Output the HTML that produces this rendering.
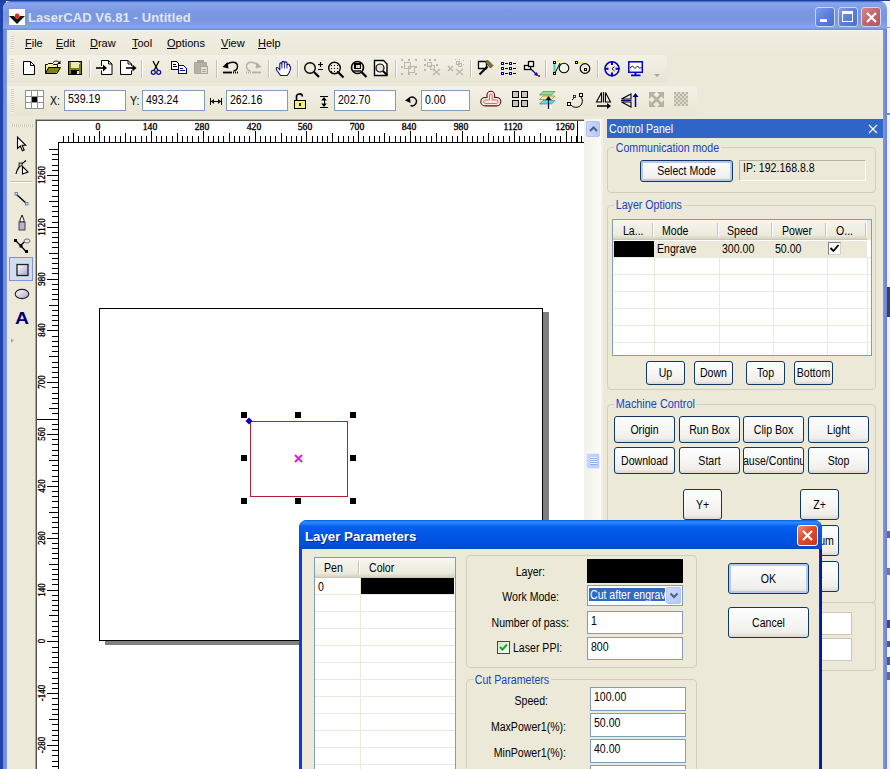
<!DOCTYPE html><html><head><meta charset="utf-8"><title>LaserCAD V6.81 - Untitled</title><style>*{box-sizing:border-box;margin:0;padding:0}
html,body{width:890px;height:769px;overflow:hidden}
body{position:relative;background:#f3f2ec;font-family:"Liberation Sans",sans-serif;font-size:11px;color:#000}
.abs{position:absolute}
.t{position:absolute;white-space:nowrap;line-height:13px}
.win{position:absolute;left:3px;top:1px;width:884px;height:780px;background:#ece9d8;border-radius:8px 8px 0 0;overflow:hidden}
.title{position:absolute;left:0;top:0;width:884px;height:29px;background:linear-gradient(#3a5ac0 0,#6888e0 1px,#8aa8ee 2px,#86a3ea 4px,#7b98e2 10px,#7a96e0 18px,#8099e6 22px,#86a6ea 26px,#7c98e0 28px,#6a84cc 29px)}
.bl{position:absolute;left:0;top:29px;width:4px;height:760px;background:linear-gradient(90deg,#6b86d8,#8099e4)}
.br{position:absolute;left:880px;top:29px;width:4px;height:760px;background:linear-gradient(90deg,#8099e4,#6b7fd0)}
.cap{position:absolute;top:6px;width:20px;height:20px;border:1px solid #c8d6f7;border-radius:3px;background:linear-gradient(135deg,#7f9eec,#5b7fdc 50%,#4c6fd0)}
.menu{position:absolute;top:37px;font-size:11px;line-height:13px}
.menu u{text-decoration:underline}
.sep{position:absolute;width:2px;height:18px;border-left:1px solid #c5c2b2;border-right:1px solid #fff}
.inp{position:absolute;background:#fff;border:1px solid #7f9db9;height:21px;font-size:12px;line-height:15px;padding:1px 0 0 3px;white-space:nowrap;overflow:hidden}
.rl{position:absolute;width:40px;text-align:center;font-family:"Liberation Serif",serif;font-size:10px;line-height:12px;transform:scaleX(.96);-webkit-text-stroke:0.35px #000}
.rv{position:absolute;width:30px;height:12px;text-align:center;font-family:"Liberation Serif",serif;font-size:10px;line-height:12px;transform:rotate(-90deg) scaleX(.89);transform-origin:50% 50%;-webkit-text-stroke:0.35px #000}
.grp{position:absolute;border:1px solid #d0d0bf;border-radius:4px}
.gl{position:absolute;background:#ece9d8;color:#1442c4;font-size:12px;line-height:14px;padding:0 2px;white-space:nowrap}
.btn{position:absolute;border:1px solid #0f3862;border-radius:3px;background:linear-gradient(#fdfeff 0,#f6f6f4 50%,#f0eeea 85%,#dcd6cc 100%);font-size:12px;line-height:14px;text-align:center;white-space:nowrap;overflow:hidden}
.btn span{position:absolute;left:-20px;right:-20px;text-align:center}
.hdr{position:absolute;background:linear-gradient(#f7f6f1 0,#ebeadb 80%,#d6d2c2 100%);border-bottom:1px solid #cbc7b8;font-size:12px;line-height:14px}
.hs{position:absolute;width:2px;border-left:1px solid #c7c5b2;border-right:1px solid #fff}
.gh{position:absolute;height:1px;background:#ece9d8}
.gv{position:absolute;width:1px;background:#ece9d8}
.hd{position:absolute;width:6px;height:6px;background:#000}

.n{transform:scaleX(.88);transform-origin:0 0}
.nr{transform:scaleX(.88);transform-origin:100% 0}
.ns{display:inline-block;transform:scaleX(.88);transform-origin:0 50%}
.btn span{transform:scaleX(.88)}
.gl{transform:scaleX(.885);transform-origin:0 0}
</style></head><body>
<!-- desktop / other windows behind -->
<div class="abs" style="left:0;top:0;width:6px;height:769px;background:#1f45ad"></div>
<div class="abs" style="left:884px;top:27px;width:6px;height:1px;background:#9a9a9a"></div>
<div class="abs" style="left:884px;top:113px;width:6px;height:2px;background:#8a8a8a"></div>
<div class="abs" style="left:886px;top:287px;width:4px;height:30px;background:#2c4470"></div>
<div class="abs" style="left:886px;top:317px;width:4px;height:460px;background:#eef3fb"></div>

<div class="abs" style="left:887px;top:531px;width:3px;height:7px;background:#5a6a9a"></div>
<div class="abs" style="left:887px;top:568px;width:3px;height:7px;background:#6a78a8"></div>
<div class="abs" style="left:887px;top:620px;width:3px;height:8px;background:#3a4a80"></div>
<div class="abs" style="left:887px;top:641px;width:3px;height:6px;background:#4a5a90"></div>
<div class="abs" style="left:887px;top:657px;width:3px;height:8px;background:#4a5a90"></div>
<div class="abs" style="left:887px;top:672px;width:3px;height:8px;background:#5a6aa0"></div>
<div class="win">
 <div class="title"></div>
 <div class="bl"></div><div class="br"></div>
 <!-- app icon -->
 <svg class="abs" style="left:6px;top:8px" width="16" height="16" viewBox="0 0 16 16"><rect width="16" height="16" fill="#fff"/><path d="M0 7h5l3 3 3-3h5l-8 8z" fill="#10140f"/><rect x="6" y="4.6" width="4.2" height="5.2" rx="1.6" fill="#e42a1c"/></svg>
 <div class="t" style="left:25px;top:9px;font-size:13px;font-weight:bold;color:#dfe6fa;line-height:16px;letter-spacing:0.1px">LaserCAD V6.81 - Untitled</div>
 <!-- caption buttons -->
 <div class="cap" style="left:812px"><div class="abs" style="left:4px;top:11px;width:7px;height:3px;background:#fff"></div></div>
 <div class="cap" style="left:835px"><div class="abs" style="left:3px;top:3px;width:11px;height:11px;border:1px solid #fff;border-top-width:3px"></div></div>
 <div class="cap" style="left:858px;background:linear-gradient(135deg,#d08a90,#c2656b 50%,#b4565c)"><svg class="abs" style="left:0;top:0" width="19" height="19"><path d="M5 5l9 9M14 5l-9 9" stroke="#fff" stroke-width="2.2" fill="none"/></svg></div>

 <!-- menu bar -->
</div>

<div class="abs" style="left:0;top:0;width:890px;height:1px;background:#1d3f9c"></div>
<div class="abs" style="left:7px;top:30px;width:876px;height:1px;background:#f4f4f6"></div>
<div class="abs" style="left:7px;top:31px;width:876px;height:23px;background:linear-gradient(#f0eee2,#ece9da)"></div>
<div class="abs" style="left:7px;top:55px;width:660px;height:28px;background:linear-gradient(#f3f1e7 0,#eeebdd 50%,#e8e5d4 100%);border-radius:0 3px 3px 0"></div>
<div class="abs" style="left:7px;top:86px;width:690px;height:30px;background:linear-gradient(#f3f1e7 0,#eeebdd 50%,#e8e5d4 100%);border-radius:0 3px 3px 0"></div>
<div class="menu" style="left:25px"><u>F</u>ile</div>
<div class="menu" style="left:56px"><u>E</u>dit</div>
<div class="menu" style="left:90px"><u>D</u>raw</div>
<div class="menu" style="left:132px"><u>T</u>ool</div>
<div class="menu" style="left:167px"><u>O</u>ptions</div>
<div class="menu" style="left:221px"><u>V</u>iew</div>
<div class="menu" style="left:258px"><u>H</u>elp</div>
<!-- toolbar grips -->
<div class="abs" style="left:11px;top:36px;width:3px;height:14px;background:repeating-linear-gradient(#d2cfc0 0 1px,#f6f5ee 1px 2px)"></div>
<div class="abs" style="left:11px;top:59px;width:3px;height:20px;background:repeating-linear-gradient(#d2cfc0 0 1px,#f6f5ee 1px 2px)"></div>
<div class="abs" style="left:11px;top:89px;width:3px;height:24px;background:repeating-linear-gradient(#d2cfc0 0 1px,#f6f5ee 1px 2px)"></div>

<!-- TOOLBAR1 -->
<!--TB1-->
<!-- TOOLBAR2 -->
<!--TB2-->

<!-- canvas area -->
<div class="abs" style="left:35px;top:119px;width:549px;height:660px;background:#aca899"></div><div class="abs" style="left:36px;top:120px;width:548px;height:660px;background:#55534a"></div><div class="abs" style="left:37px;top:121px;width:547px;height:660px;background:#fff"></div>
<div class="abs" style="left:58px;top:142px;width:526px;height:1px;background:#000"></div>
<div class="abs" style="left:58px;top:142px;width:1px;height:640px;background:#000"></div>
<div class="abs" style="left:37px;top:419px;width:21px;height:1px;background:#000"></div>
<div class="abs" style="left:577px;top:121px;width:1px;height:21px;background:#000"></div>

<svg class="abs" style="left:0;top:0" width="890" height="769" shape-rendering="crispEdges"><rect x="63" y="136" width="1" height="6" fill="#000"/><rect x="68" y="136" width="1" height="6" fill="#000"/><rect x="73" y="133" width="1" height="9" fill="#000"/><rect x="78" y="136" width="1" height="6" fill="#000"/><rect x="84" y="136" width="1" height="6" fill="#000"/><rect x="89" y="136" width="1" height="6" fill="#000"/><rect x="94" y="136" width="1" height="6" fill="#000"/><rect x="99" y="131" width="1" height="11" fill="#000"/><rect x="104" y="136" width="1" height="6" fill="#000"/><rect x="109" y="136" width="1" height="6" fill="#000"/><rect x="115" y="136" width="1" height="6" fill="#000"/><rect x="120" y="136" width="1" height="6" fill="#000"/><rect x="125" y="133" width="1" height="9" fill="#000"/><rect x="130" y="136" width="1" height="6" fill="#000"/><rect x="135" y="136" width="1" height="6" fill="#000"/><rect x="141" y="136" width="1" height="6" fill="#000"/><rect x="146" y="136" width="1" height="6" fill="#000"/><rect x="151" y="131" width="1" height="11" fill="#000"/><rect x="156" y="136" width="1" height="6" fill="#000"/><rect x="161" y="136" width="1" height="6" fill="#000"/><rect x="166" y="136" width="1" height="6" fill="#000"/><rect x="172" y="136" width="1" height="6" fill="#000"/><rect x="177" y="133" width="1" height="9" fill="#000"/><rect x="182" y="136" width="1" height="6" fill="#000"/><rect x="187" y="136" width="1" height="6" fill="#000"/><rect x="192" y="136" width="1" height="6" fill="#000"/><rect x="198" y="136" width="1" height="6" fill="#000"/><rect x="203" y="131" width="1" height="11" fill="#000"/><rect x="208" y="136" width="1" height="6" fill="#000"/><rect x="213" y="136" width="1" height="6" fill="#000"/><rect x="218" y="136" width="1" height="6" fill="#000"/><rect x="223" y="136" width="1" height="6" fill="#000"/><rect x="229" y="133" width="1" height="9" fill="#000"/><rect x="234" y="136" width="1" height="6" fill="#000"/><rect x="239" y="136" width="1" height="6" fill="#000"/><rect x="244" y="136" width="1" height="6" fill="#000"/><rect x="249" y="136" width="1" height="6" fill="#000"/><rect x="255" y="131" width="1" height="11" fill="#000"/><rect x="260" y="136" width="1" height="6" fill="#000"/><rect x="265" y="136" width="1" height="6" fill="#000"/><rect x="270" y="136" width="1" height="6" fill="#000"/><rect x="275" y="136" width="1" height="6" fill="#000"/><rect x="281" y="133" width="1" height="9" fill="#000"/><rect x="286" y="136" width="1" height="6" fill="#000"/><rect x="291" y="136" width="1" height="6" fill="#000"/><rect x="296" y="136" width="1" height="6" fill="#000"/><rect x="301" y="136" width="1" height="6" fill="#000"/><rect x="306" y="131" width="1" height="11" fill="#000"/><rect x="312" y="136" width="1" height="6" fill="#000"/><rect x="317" y="136" width="1" height="6" fill="#000"/><rect x="322" y="136" width="1" height="6" fill="#000"/><rect x="327" y="136" width="1" height="6" fill="#000"/><rect x="332" y="133" width="1" height="9" fill="#000"/><rect x="338" y="136" width="1" height="6" fill="#000"/><rect x="343" y="136" width="1" height="6" fill="#000"/><rect x="348" y="136" width="1" height="6" fill="#000"/><rect x="353" y="136" width="1" height="6" fill="#000"/><rect x="358" y="131" width="1" height="11" fill="#000"/><rect x="363" y="136" width="1" height="6" fill="#000"/><rect x="369" y="136" width="1" height="6" fill="#000"/><rect x="374" y="136" width="1" height="6" fill="#000"/><rect x="379" y="136" width="1" height="6" fill="#000"/><rect x="384" y="133" width="1" height="9" fill="#000"/><rect x="389" y="136" width="1" height="6" fill="#000"/><rect x="395" y="136" width="1" height="6" fill="#000"/><rect x="400" y="136" width="1" height="6" fill="#000"/><rect x="405" y="136" width="1" height="6" fill="#000"/><rect x="410" y="131" width="1" height="11" fill="#000"/><rect x="415" y="136" width="1" height="6" fill="#000"/><rect x="420" y="136" width="1" height="6" fill="#000"/><rect x="426" y="136" width="1" height="6" fill="#000"/><rect x="431" y="136" width="1" height="6" fill="#000"/><rect x="436" y="133" width="1" height="9" fill="#000"/><rect x="441" y="136" width="1" height="6" fill="#000"/><rect x="446" y="136" width="1" height="6" fill="#000"/><rect x="452" y="136" width="1" height="6" fill="#000"/><rect x="457" y="136" width="1" height="6" fill="#000"/><rect x="462" y="131" width="1" height="11" fill="#000"/><rect x="467" y="136" width="1" height="6" fill="#000"/><rect x="472" y="136" width="1" height="6" fill="#000"/><rect x="477" y="136" width="1" height="6" fill="#000"/><rect x="483" y="136" width="1" height="6" fill="#000"/><rect x="488" y="133" width="1" height="9" fill="#000"/><rect x="493" y="136" width="1" height="6" fill="#000"/><rect x="498" y="136" width="1" height="6" fill="#000"/><rect x="503" y="136" width="1" height="6" fill="#000"/><rect x="509" y="136" width="1" height="6" fill="#000"/><rect x="514" y="131" width="1" height="11" fill="#000"/><rect x="519" y="136" width="1" height="6" fill="#000"/><rect x="524" y="136" width="1" height="6" fill="#000"/><rect x="529" y="136" width="1" height="6" fill="#000"/><rect x="534" y="136" width="1" height="6" fill="#000"/><rect x="540" y="133" width="1" height="9" fill="#000"/><rect x="545" y="136" width="1" height="6" fill="#000"/><rect x="550" y="136" width="1" height="6" fill="#000"/><rect x="555" y="136" width="1" height="6" fill="#000"/><rect x="560" y="136" width="1" height="6" fill="#000"/><rect x="566" y="131" width="1" height="11" fill="#000"/><rect x="571" y="136" width="1" height="6" fill="#000"/><rect x="576" y="136" width="1" height="6" fill="#000"/><rect x="581" y="136" width="1" height="6" fill="#000"/><rect x="52" y="766" width="6" height="1" fill="#000"/><rect x="52" y="761" width="6" height="1" fill="#000"/><rect x="52" y="755" width="6" height="1" fill="#000"/><rect x="52" y="750" width="6" height="1" fill="#000"/><rect x="47" y="745" width="11" height="1" fill="#000"/><rect x="52" y="740" width="6" height="1" fill="#000"/><rect x="52" y="735" width="6" height="1" fill="#000"/><rect x="52" y="730" width="6" height="1" fill="#000"/><rect x="52" y="724" width="6" height="1" fill="#000"/><rect x="49" y="719" width="9" height="1" fill="#000"/><rect x="52" y="714" width="6" height="1" fill="#000"/><rect x="52" y="709" width="6" height="1" fill="#000"/><rect x="52" y="704" width="6" height="1" fill="#000"/><rect x="52" y="698" width="6" height="1" fill="#000"/><rect x="47" y="693" width="11" height="1" fill="#000"/><rect x="52" y="688" width="6" height="1" fill="#000"/><rect x="52" y="683" width="6" height="1" fill="#000"/><rect x="52" y="678" width="6" height="1" fill="#000"/><rect x="52" y="672" width="6" height="1" fill="#000"/><rect x="49" y="667" width="9" height="1" fill="#000"/><rect x="52" y="662" width="6" height="1" fill="#000"/><rect x="52" y="657" width="6" height="1" fill="#000"/><rect x="52" y="652" width="6" height="1" fill="#000"/><rect x="52" y="647" width="6" height="1" fill="#000"/><rect x="47" y="641" width="11" height="1" fill="#000"/><rect x="52" y="636" width="6" height="1" fill="#000"/><rect x="52" y="631" width="6" height="1" fill="#000"/><rect x="52" y="626" width="6" height="1" fill="#000"/><rect x="52" y="621" width="6" height="1" fill="#000"/><rect x="49" y="615" width="9" height="1" fill="#000"/><rect x="52" y="610" width="6" height="1" fill="#000"/><rect x="52" y="605" width="6" height="1" fill="#000"/><rect x="52" y="600" width="6" height="1" fill="#000"/><rect x="52" y="595" width="6" height="1" fill="#000"/><rect x="47" y="590" width="11" height="1" fill="#000"/><rect x="52" y="584" width="6" height="1" fill="#000"/><rect x="52" y="579" width="6" height="1" fill="#000"/><rect x="52" y="574" width="6" height="1" fill="#000"/><rect x="52" y="569" width="6" height="1" fill="#000"/><rect x="49" y="564" width="9" height="1" fill="#000"/><rect x="52" y="558" width="6" height="1" fill="#000"/><rect x="52" y="553" width="6" height="1" fill="#000"/><rect x="52" y="548" width="6" height="1" fill="#000"/><rect x="52" y="543" width="6" height="1" fill="#000"/><rect x="47" y="538" width="11" height="1" fill="#000"/><rect x="52" y="533" width="6" height="1" fill="#000"/><rect x="52" y="527" width="6" height="1" fill="#000"/><rect x="52" y="522" width="6" height="1" fill="#000"/><rect x="52" y="517" width="6" height="1" fill="#000"/><rect x="49" y="512" width="9" height="1" fill="#000"/><rect x="52" y="507" width="6" height="1" fill="#000"/><rect x="52" y="501" width="6" height="1" fill="#000"/><rect x="52" y="496" width="6" height="1" fill="#000"/><rect x="52" y="491" width="6" height="1" fill="#000"/><rect x="47" y="486" width="11" height="1" fill="#000"/><rect x="52" y="481" width="6" height="1" fill="#000"/><rect x="52" y="476" width="6" height="1" fill="#000"/><rect x="52" y="470" width="6" height="1" fill="#000"/><rect x="52" y="465" width="6" height="1" fill="#000"/><rect x="49" y="460" width="9" height="1" fill="#000"/><rect x="52" y="455" width="6" height="1" fill="#000"/><rect x="52" y="450" width="6" height="1" fill="#000"/><rect x="52" y="444" width="6" height="1" fill="#000"/><rect x="52" y="439" width="6" height="1" fill="#000"/><rect x="47" y="434" width="11" height="1" fill="#000"/><rect x="52" y="429" width="6" height="1" fill="#000"/><rect x="52" y="424" width="6" height="1" fill="#000"/><rect x="52" y="419" width="6" height="1" fill="#000"/><rect x="52" y="413" width="6" height="1" fill="#000"/><rect x="49" y="408" width="9" height="1" fill="#000"/><rect x="52" y="403" width="6" height="1" fill="#000"/><rect x="52" y="398" width="6" height="1" fill="#000"/><rect x="52" y="393" width="6" height="1" fill="#000"/><rect x="52" y="387" width="6" height="1" fill="#000"/><rect x="47" y="382" width="11" height="1" fill="#000"/><rect x="52" y="377" width="6" height="1" fill="#000"/><rect x="52" y="372" width="6" height="1" fill="#000"/><rect x="52" y="367" width="6" height="1" fill="#000"/><rect x="52" y="362" width="6" height="1" fill="#000"/><rect x="49" y="356" width="9" height="1" fill="#000"/><rect x="52" y="351" width="6" height="1" fill="#000"/><rect x="52" y="346" width="6" height="1" fill="#000"/><rect x="52" y="341" width="6" height="1" fill="#000"/><rect x="52" y="336" width="6" height="1" fill="#000"/><rect x="47" y="330" width="11" height="1" fill="#000"/><rect x="52" y="325" width="6" height="1" fill="#000"/><rect x="52" y="320" width="6" height="1" fill="#000"/><rect x="52" y="315" width="6" height="1" fill="#000"/><rect x="52" y="310" width="6" height="1" fill="#000"/><rect x="49" y="305" width="9" height="1" fill="#000"/><rect x="52" y="299" width="6" height="1" fill="#000"/><rect x="52" y="294" width="6" height="1" fill="#000"/><rect x="52" y="289" width="6" height="1" fill="#000"/><rect x="52" y="284" width="6" height="1" fill="#000"/><rect x="47" y="279" width="11" height="1" fill="#000"/><rect x="52" y="273" width="6" height="1" fill="#000"/><rect x="52" y="268" width="6" height="1" fill="#000"/><rect x="52" y="263" width="6" height="1" fill="#000"/><rect x="52" y="258" width="6" height="1" fill="#000"/><rect x="49" y="253" width="9" height="1" fill="#000"/><rect x="52" y="247" width="6" height="1" fill="#000"/><rect x="52" y="242" width="6" height="1" fill="#000"/><rect x="52" y="237" width="6" height="1" fill="#000"/><rect x="52" y="232" width="6" height="1" fill="#000"/><rect x="47" y="227" width="11" height="1" fill="#000"/><rect x="52" y="222" width="6" height="1" fill="#000"/><rect x="52" y="216" width="6" height="1" fill="#000"/><rect x="52" y="211" width="6" height="1" fill="#000"/><rect x="52" y="206" width="6" height="1" fill="#000"/><rect x="49" y="201" width="9" height="1" fill="#000"/><rect x="52" y="196" width="6" height="1" fill="#000"/><rect x="52" y="190" width="6" height="1" fill="#000"/><rect x="52" y="185" width="6" height="1" fill="#000"/><rect x="52" y="180" width="6" height="1" fill="#000"/><rect x="47" y="175" width="11" height="1" fill="#000"/><rect x="52" y="170" width="6" height="1" fill="#000"/><rect x="52" y="165" width="6" height="1" fill="#000"/><rect x="52" y="159" width="6" height="1" fill="#000"/><rect x="52" y="154" width="6" height="1" fill="#000"/><rect x="49" y="149" width="9" height="1" fill="#000"/></svg>
<div class="rl" style="left:78px;top:121px;">0</div>
<div class="rl" style="left:130px;top:121px;">140</div>
<div class="rl" style="left:182px;top:121px;">280</div>
<div class="rl" style="left:234px;top:121px;">420</div>
<div class="rl" style="left:285px;top:121px;">560</div>
<div class="rl" style="left:337px;top:121px;">700</div>
<div class="rl" style="left:389px;top:121px;">840</div>
<div class="rl" style="left:441px;top:121px;">980</div>
<div class="rl" style="left:493px;top:121px;">1120</div>
<div class="rl" style="left:545px;top:121px;">1260</div>
<div class="rv" style="left:27px;top:739px;">-280</div>
<div class="rv" style="left:27px;top:687px;">-140</div>
<div class="rv" style="left:27px;top:635px;">0</div>
<div class="rv" style="left:27px;top:584px;">140</div>
<div class="rv" style="left:27px;top:532px;">280</div>
<div class="rv" style="left:27px;top:480px;">420</div>
<div class="rv" style="left:27px;top:428px;">560</div>
<div class="rv" style="left:27px;top:376px;">700</div>
<div class="rv" style="left:27px;top:324px;">840</div>
<div class="rv" style="left:27px;top:273px;">980</div>
<div class="rv" style="left:27px;top:221px;">1120</div>
<div class="rv" style="left:27px;top:169px;">1260</div>
<svg class="abs" style="left:0;top:0" width="890" height="350" viewBox="0 0 890 350" fill="none">
<!-- separators tb1 -->
<g shape-rendering="crispEdges">
<g fill="#c5c2b2"><rect x="89" y="60" width="1" height="18"/><rect x="141" y="60" width="1" height="18"/><rect x="216" y="60" width="1" height="18"/><rect x="268" y="60" width="1" height="18"/><rect x="297" y="60" width="1" height="18"/><rect x="395" y="60" width="1" height="18"/><rect x="470" y="60" width="1" height="18"/><rect x="545" y="60" width="1" height="18"/><rect x="597" y="60" width="1" height="18"/></g>
<g fill="#fff"><rect x="90" y="60" width="1" height="18"/><rect x="142" y="60" width="1" height="18"/><rect x="217" y="60" width="1" height="18"/><rect x="269" y="60" width="1" height="18"/><rect x="298" y="60" width="1" height="18"/><rect x="396" y="60" width="1" height="18"/><rect x="471" y="60" width="1" height="18"/><rect x="546" y="60" width="1" height="18"/><rect x="598" y="60" width="1" height="18"/></g>
</g>
<!-- new -->
<path d="M23.500 61.500h7l4 4v9h-11z" fill="#fff" stroke="#000"/><path d="M30.500 61.500v4h4" stroke="#000"/>
<!-- open -->
<path d="M45.500 73.500v-9h2l1-1h4l1 1h4v3" fill="#f4f0a0" stroke="#000"/><path d="M45.500 73.500l3-6h12l-3.500 6z" fill="#808020" stroke="#000"/><path d="M53 62.500c2-2 5-2 6.500 0.500" stroke="#000"/><path d="M60.500 60.500v3.500h-3.500z" fill="#000"/>
<!-- save -->
<g shape-rendering="crispEdges"><rect x="68" y="61" width="14" height="14" fill="#000"/><rect x="69" y="62" width="12" height="12" fill="#808000"/><rect x="71" y="62" width="8" height="6" fill="#e8e8b0"/><rect x="71" y="70" width="8" height="4" fill="#000"/><rect x="77" y="71" width="2" height="3" fill="#e8e8b0"/><rect x="79" y="63" width="1" height="1" fill="#e8e8b0"/></g>
<!-- import -->
<path d="M101.500 66v-5.500h7l3.500 3.500v10.500h-10.500v-4" fill="#fff" stroke="#000"/><path d="M108.500 60.500v3.500h3.500" stroke="#000"/><path d="M96 68h8" stroke="#000" stroke-width="1.600"/><path d="M103 64.500l4 3.500-4 3.500z" fill="#000"/>
<!-- export -->
<path d="M131.500 66v-2l-3.500-3.500h-7.500v14h11v-4" fill="#fff" stroke="#000"/><path d="M128 60.500v3.500h3.500" stroke="#000"/><path d="M126 68h8" stroke="#000" stroke-width="1.600"/><path d="M132.500 64.500l4 3.500-4 3.500z" fill="#000"/>
<!-- cut -->
<path d="M153 61l5 9.500M159 61l-5 9.500" stroke="#000" stroke-width="1.300"/><circle cx="153.300" cy="72.300" r="2" stroke="#101090" stroke-width="1.300"/><circle cx="158.700" cy="72.300" r="2" stroke="#101090" stroke-width="1.300"/>
<!-- copy -->
<g shape-rendering="crispEdges"><path d="M171.500 61.500h5l2 2v6h-7z" fill="#fff" stroke="#000"/><path d="M173 64.500h3M173 66.500h4" stroke="#000"/><path d="M178.500 65.500h5l3 3v5h-8z" fill="#fff" stroke="#000080"/><path d="M180 68.500h3M180 70.500h5" stroke="#000080"/></g>
<!-- paste disabled -->
<path d="M194.500 62.500h12v11h-12z" fill="#b4b2a4" stroke="#a8a698"/><rect x="197" y="60" width="7" height="3" fill="#a8a698"/><rect x="200.500" y="66.500" width="7" height="7" fill="#e4e1d0" stroke="#a8a698"/><path d="M202 69.500h4M202 71.500h4" stroke="#a8a698"/>
<!-- undo -->
<path d="M226 65.500C229 61.500 237.500 60.500 237.500 66.500C237.500 69 236 70.500 233.500 71" stroke="#000" stroke-width="1.400"/><path d="M222.500 67l5-5 1 6.500z" fill="#000"/><path d="M223 72.500h9" stroke="#000" stroke-width="1.800"/><path d="M233 72.500h5" stroke="#000" stroke-width="1.800" stroke-dasharray="1 1"/>
<!-- redo disabled -->
<path d="M258 65.500C255 61.500 246.500 60.500 246.500 66.500C246.500 69 248 70.500 250.500 71" stroke="#b4b2a4" stroke-width="1.400"/><path d="M261.500 67l-5-5-1 6.500z" fill="#b4b2a4"/><path d="M252 72.500h9" stroke="#b4b2a4" stroke-width="1.800"/><path d="M246 72.500h5" stroke="#b4b2a4" stroke-width="1.800" stroke-dasharray="1 1"/>
<!-- hand -->
<path d="M280.500 75.500L277 70.500C276 69 276 67.500 277 67.500C278 67.500 279 68.500 279.800 70L279.800 64C279.800 62.500 281.900 62.500 281.900 64L282 62.500C282 61 284.300 61 284.300 62.500L284.500 63C284.500 61.500 286.900 61.500 286.900 63L287.200 65C287.400 63.700 289.700 64 289.600 65.500C291 67 290.500 70 289.200 72.500L287.200 75.500Z" fill="#fff" stroke="#101080" stroke-width="1.100" stroke-linejoin="round"/><path d="M281.900 64v4.500M284.400 63v5.500M286.900 64v4.500" stroke="#101080" stroke-width="0.900"/>
<!-- zoom + -->
<circle cx="310" cy="68" r="5.300" stroke="#000" stroke-width="1.400"/><path d="M314 72l5 5" stroke="#000" stroke-width="2.200"/><path d="M318 64.500h5M320.500 62v5M318 69.500h5" stroke="#000" stroke-width="1.200"/>
<!-- zoom dotted -->
<circle cx="334.500" cy="68" r="5.800" stroke="#000" stroke-width="1.400"/><path d="M338.500 72.500l5 5" stroke="#000" stroke-width="2.200"/><g fill="#000"><rect x="331" y="65" width="1" height="1"/><rect x="334" y="65" width="1" height="1"/><rect x="337" y="65" width="1" height="1"/><rect x="331" y="68" width="1" height="1"/><rect x="334" y="68" width="1" height="1"/><rect x="337" y="68" width="1" height="1"/><rect x="331" y="71" width="1" height="1"/><rect x="334" y="71" width="1" height="1"/><rect x="337" y="71" width="1" height="1"/></g>
<!-- zoom 3 -->
<circle cx="357.500" cy="67.500" r="6" stroke="#000" stroke-width="1.600"/><path d="M361.500 72l5 5" stroke="#000" stroke-width="2.200"/><rect x="354" y="63" width="7" height="6" fill="#000"/><rect x="356" y="65" width="4" height="3" fill="#d8d5c4"/><path d="M353 71h8" stroke="#000" stroke-width="1.400"/>
<!-- zoom page -->
<path d="M374.500 60.500h9l3.500 3.500v11.500h-12.500z" fill="#fff" stroke="#000" stroke-width="1.400"/><circle cx="380" cy="68" r="4" fill="#e4e1d0" stroke="#000" stroke-width="1.200"/><path d="M383 71l4 4" stroke="#000" stroke-width="2"/>
<!-- group disabled -->
<g stroke="#bab8a8" fill="none"><rect x="404.500" y="62.500" width="6" height="6"/><rect x="408.500" y="66.500" width="6" height="6"/></g>
<g fill="#bab8a8"><rect x="401" y="59" width="2" height="2"/><rect x="408" y="59" width="2" height="2"/><rect x="415" y="59" width="2" height="2"/><rect x="401" y="66" width="2" height="2"/><rect x="415" y="66" width="2" height="2"/><rect x="401" y="73" width="2" height="2"/><rect x="408" y="73" width="2" height="2"/><rect x="415" y="73" width="2" height="2"/></g>
<!-- ungroup disabled -->
<g stroke="#bab8a8" fill="none"><rect x="427.500" y="62.500" width="4" height="4"/><rect x="430.500" y="65.500" width="4" height="4"/><path d="M433 69l7 6M440 69l-7 6" stroke-width="1.600"/></g>
<g fill="#bab8a8"><rect x="424" y="59" width="2" height="2"/><rect x="429" y="59" width="2" height="2"/><rect x="434" y="59" width="2" height="2"/><rect x="424" y="64" width="2" height="2"/><rect x="424" y="69" width="2" height="2"/><rect x="436" y="64" width="2" height="2"/></g>
<!-- disabled 3 -->
<g stroke="#bab8a8" fill="none"><rect x="456.500" y="61.500" width="3" height="3"/><rect x="458.500" y="63.500" width="3" height="3"/><path d="M448 66l5 5M453 66l-5 5M456 69l7 6M463 69l-7 6" stroke-width="1.500"/></g>
<g fill="#bab8a8"><rect x="455" y="59" width="1" height="1"/><rect x="459" y="59" width="1" height="1"/><rect x="463" y="60" width="1" height="1"/><rect x="463" y="64" width="1" height="1"/></g>
<!-- hammer -->
<path d="M478.500 61.500h8v7h-8z" fill="#fff" stroke="#000" stroke-width="1.300"/><path d="M479.500 74.500l8-8" stroke="#000" stroke-width="2"/><path d="M485 62l3-1.500 5 5-2.500 2.500z" fill="#807830" stroke="#403c10" stroke-width="0.800"/>
<!-- list -->
<g shape-rendering="crispEdges" stroke="#000080" fill="#fff"><rect x="501.500" y="62.500" width="2" height="2"/><rect x="509.500" y="62.500" width="2" height="2"/><rect x="501.500" y="67.500" width="2" height="2"/><rect x="509.500" y="67.500" width="2" height="2"/><rect x="501.500" y="72.500" width="2" height="2"/><rect x="509.500" y="72.500" width="2" height="2"/></g>
<g shape-rendering="crispEdges" fill="#000"><rect x="505" y="63" width="3" height="1"/><rect x="513" y="63" width="3" height="1"/><rect x="505" y="68" width="3" height="1"/><rect x="513" y="68" width="3" height="1"/><rect x="505" y="73" width="3" height="1"/><rect x="513" y="73" width="3" height="1"/></g>
<!-- squares arrow -->
<rect x="524.500" y="65.500" width="6" height="4" fill="#fff" stroke="#000" stroke-width="1.300"/><rect x="528.500" y="61.500" width="5" height="5" fill="#fff" stroke="#000" stroke-width="1.300"/><path d="M531 69l6 6" stroke="#000090" stroke-width="1.200"/><path d="M538 76l-4-1 3-3z" fill="#0000c0"/><rect x="538" y="75" width="2" height="2" fill="#c02060"/>
<!-- node circle -->
<path d="M554.500 63v10" stroke="#40d0c0" stroke-width="2"/><path d="M555 73l5-10" stroke="#000"/><circle cx="564" cy="68" r="4.800" stroke="#000" stroke-width="1.100" fill="#f0f4e8"/><rect x="553.500" y="61.500" width="2" height="2" fill="#fff" stroke="#000"/><rect x="553.500" y="72.500" width="2" height="2" fill="#fff" stroke="#000"/><rect x="557" y="60" width="4" height="2" fill="#f0f060"/>
<!-- node circle 2 -->
<path d="M578 62.500l7 1" stroke="#e8e850" stroke-width="1.600"/><circle cx="585" cy="68.500" r="4.800" stroke="#000" stroke-width="1.200"/><rect x="575.500" y="61.500" width="2" height="2" fill="#ffffa0" stroke="#000"/><rect x="584.500" y="68.500" width="2" height="2" fill="#ffffa0" stroke="#000"/>
<!-- target -->
<circle cx="612" cy="68.800" r="7" stroke="#0000b0" stroke-width="1.500"/><path d="M612 61v4M612 72.500v4M604.500 68.800h4M615.500 68.800h4" stroke="#0000c8" stroke-width="2"/><path d="M614.500 66.500l-2.500 2.300 2.500 2.300" stroke="#000" stroke-width="0.900"/>
<!-- monitor -->
<rect x="628.800" y="61.800" width="13.500" height="10.500" fill="#fff" stroke="#0000c8" stroke-width="1.500"/><path d="M630 68l2.500-2 2.500 2.500 2.500-2.500 2.500 2.500 1.500-1.500" stroke="#000" stroke-width="0.900"/><path d="M635.500 72v2.500M631 75.300h9.500" stroke="#0000c8" stroke-width="1.800"/>
<!-- dropdown -->
<path d="M654 74h6l-3 3z" fill="#a8a698"/>

<!-- ===== TOOLBAR 2 ===== -->
<g shape-rendering="crispEdges"><rect x="25" y="90" width="19" height="19" fill="#909090"/><g fill="#fff"><rect x="26" y="91" width="5" height="5"/><rect x="32" y="91" width="5" height="5"/><rect x="38" y="91" width="5" height="5"/><rect x="26" y="97" width="5" height="5"/><rect x="38" y="97" width="5" height="5"/><rect x="26" y="103" width="5" height="5"/><rect x="32" y="103" width="5" height="5"/><rect x="38" y="103" width="5" height="5"/></g><rect x="32" y="97" width="5" height="5" fill="#000"/></g>
<!-- width icon -->
<g shape-rendering="crispEdges" fill="#000"><rect x="210" y="98" width="1" height="7"/><rect x="221" y="98" width="1" height="7"/><rect x="211" y="101" width="10" height="1"/></g><path d="M211 101.500l3-2.500v5zM221 101.500l-3-2.500v5z" fill="#000"/>
<!-- lock -->
<path d="M296.500 100v-2.500a3 3 0 0 1 6 -1" stroke="#000" stroke-width="1.600"/><rect x="294.500" y="100.500" width="11" height="8" fill="#f4ec90" stroke="#000"/><path d="M300 103v3" stroke="#000" stroke-width="1.600"/>
<!-- height icon -->
<g shape-rendering="crispEdges" fill="#000"><rect x="320" y="96" width="8" height="1"/><rect x="320" y="107" width="8" height="1"/><rect x="323.500" y="98" width="1" height="8"/></g><path d="M324 97l2.800 3.500h-5.600zM324 107l2.800-3.500h-5.600z" fill="#000"/>
<!-- rotate -->
<path d="M409 98.500a4.300 4.300 0 1 1 1.500 7" stroke="#000" stroke-width="1.400"/><path d="M405 100.500l5-3.500 0.500 6z" fill="#000"/>
<!-- weld -->
<path d="M485 97.500h2v-2.500a3.800 3.800 0 0 1 7.600 0v2.500h2a4.200 4.200 0 0 1 0 8.400h-11.600a4.200 4.200 0 0 1 0-8.400z" fill="#fbeae4" stroke="#581010" stroke-width="1.100"/><path d="M485.500 100h4v-4.800a1.300 1.300 0 0 1 2.600 0v4.800h4.200a1.700 1.700 0 0 1 0 3.400h-10.800a1.700 1.700 0 0 1 0-3.400z" fill="#fdf2ee" stroke="#d05050" stroke-width="0.900"/>
<!-- four squares -->
<g shape-rendering="crispEdges" stroke="#000" stroke-width="1"><rect x="512.500" y="91.500" width="6" height="6" fill="#c8c6bc"/><rect x="521.500" y="91.500" width="6" height="6" fill="#c8c6bc"/><rect x="512.500" y="100.500" width="6" height="6" fill="#c8c6bc"/><rect x="521.500" y="100.500" width="6" height="6" fill="#c8c6bc"/></g>
<!-- layers -->
<path d="M543 91.500h12l-3.500 3.500h-12z" fill="#8ce08c" stroke="#306030" stroke-width="0.500"/><path d="M543 96h12l-3.500 3.500h-12z" fill="#f4ec90" stroke="#605820" stroke-width="0.500"/><path d="M543 100.500h12l-3.500 3.500h-12z" fill="#50e0e0" stroke="#206060" stroke-width="0.500"/><path d="M548.500 98v11" stroke="#101040" stroke-width="1.200"/><path d="M548.500 96l3 4h-6z" fill="#101040"/><path d="M550 104l2.500 4.500h-2.500z" fill="#fff"/>
<!-- node arc -->
<path d="M571 105a6 6 0 1 0 10-8" stroke="#000" stroke-width="1"/><rect x="567.500" y="102.500" width="3" height="3" fill="#fff" stroke="#000"/><rect x="579.500" y="93.500" width="3" height="3" fill="#fff" stroke="#000"/><rect x="573.500" y="95.500" width="2" height="2" fill="#fff" stroke="#000" stroke-width="0.800"/><path d="M572 100l3-3" stroke="#000" stroke-width="0.900"/>
<!-- mirror h -->
<path d="M601.500 92.500v9.500h-5zM605.500 92.500v9.500h5z" stroke="#000" stroke-width="1.100"/><path d="M603.500 92v10.500" stroke="#000080" stroke-width="1.200"/><path d="M597 106h10" stroke="#000" stroke-width="1.500"/><path d="M611 106l-4-3v6z" fill="#000"/>
<!-- mirror v -->
<path d="M621.500 99h9.500v-5zM621.500 102h9.500v5z" stroke="#000" stroke-width="1.100"/><path d="M621 100.500h10.500" stroke="#000080" stroke-width="1.200"/><path d="M635.500 107v-10" stroke="#000080" stroke-width="1.500"/><path d="M635.500 93l-3 4h6z" fill="#000080"/>
<!-- disabled arrows -->
<path d="M649 92h7l-7 7zM664 92v7l-7-7zM649 107v-7l7 7zM664 107h-7l7-7z" fill="#b4b2a2"/><path d="M652 95l9 9M661 95l-9 9" stroke="#b4b2a2" stroke-width="2.600"/>
<!-- checker -->
<defs><pattern id="ck" x="674" y="92" width="4" height="4" patternUnits="userSpaceOnUse"><rect width="2" height="2" fill="#b8b6a6"/><rect x="2" y="2" width="2" height="2" fill="#b8b6a6"/><rect x="2" width="2" height="2" fill="#dcd9c9"/><rect y="2" width="2" height="2" fill="#dcd9c9"/></pattern></defs><rect x="674" y="92" width="14" height="14" fill="url(#ck)" shape-rendering="crispEdges"/>

<!-- ===== TOOLBOX ===== -->
<!-- arrow -->
<path d="M17.500 137v11.500l2.800-2.500 2.100 4.800 1.800-0.800-2.100-4.700h3.600z" fill="#fff" stroke="#000" stroke-width="1.100"/>
<!-- node edit -->
<path d="M16 174c1-6 5-10 10-13.500" stroke="#000" stroke-width="1.200"/><path d="M22.500 166.500l5.500 5.500-5.500 2z" fill="#fff" stroke="#000" stroke-width="1.100"/><rect x="19" y="163" width="3" height="3" fill="#d8d5c4" stroke="#000" stroke-width="0.800"/>
<path d="M10 181.500h22" stroke="#c5c2b2"/><path d="M10 182.500h22" stroke="#fff"/>
<!-- line -->
<path d="M16.500 194.500l10 9" stroke="#000" stroke-width="1.400"/><rect x="15" y="192.500" width="2.500" height="2.500" fill="#c0e0f0" stroke="#5080a0" stroke-width="0.800"/><rect x="25.500" y="202.500" width="2.500" height="2.500" fill="#c0e0f0" stroke="#5080a0" stroke-width="0.800"/>
<!-- pen -->
<path d="M22 215l-2 5v2h4v-2z" fill="#fff" stroke="#000" stroke-width="0.900"/><rect x="19" y="222" width="6" height="8" fill="#b8b4c8" stroke="#303050" stroke-width="0.900"/>
<!-- node tool -->
<path d="M15.500 240.500l5 5 5.500 6M20.500 245.500l5.500-5" stroke="#000" stroke-width="1.300"/><rect x="14" y="239" width="3" height="3" fill="#000"/><rect x="19.500" y="244.500" width="3" height="3" fill="#000"/><rect x="25" y="250" width="3" height="3" fill="#000"/><ellipse cx="27" cy="241" rx="3" ry="2" fill="#e8e8f0" stroke="#606070" stroke-width="0.900"/>
<!-- rect selected -->
<rect x="9.500" y="257.500" width="23" height="23" fill="#d4dcf2" stroke="#7a98d8"/><defs><linearGradient id="g1" x1="0" y1="0" x2="1" y2="1"><stop offset="0" stop-color="#fff"/><stop offset="1" stop-color="#a8a4c8"/></linearGradient></defs><rect x="17" y="264.500" width="11" height="11" fill="url(#g1)" stroke="#202020" stroke-width="1.300"/>
<!-- ellipse -->
<ellipse cx="22" cy="294" rx="6.800" ry="4.600" fill="url(#g1)" stroke="#202030" stroke-width="1.100"/>
<!-- A -->
<text x="15" y="324" font-family="Liberation Sans, sans-serif" font-weight="bold" font-size="17" fill="#000070" textLength="14" lengthAdjust="spacingAndGlyphs">A</text>
<path d="M14 340.500l-3-2v4z" fill="#a8a698"/>
</svg>
<!-- toolbox grip -->
<div class="abs" style="left:12px;top:124px;width:21px;height:3px;background:repeating-linear-gradient(90deg,#c9c6b6 0 1px,#f6f5ee 1px 2px)"></div>

<!-- toolbar2 labels & inputs -->
<div class="t n" style="left:50px;top:94px;font-size:12px;line-height:14px">X:</div>
<div class="inp" style="left:64px;top:90px;width:62px"><span class="ns">539.19</span></div>
<div class="t n" style="left:130px;top:94px;font-size:12px;line-height:14px">Y:</div>
<div class="inp" style="left:142px;top:90px;width:63px;padding-top:2px"><span class="ns">493.24</span></div>
<div class="inp" style="left:226px;top:90px;width:62px;padding-top:2px"><span class="ns">262.16</span></div>
<div class="inp" style="left:334px;top:90px;width:62px;padding-top:2px"><span class="ns">202.70</span></div>
<div class="inp" style="left:421px;top:90px;width:49px;padding-top:2px"><span class="ns">0.00</span></div>

<!-- paper -->
<div class="abs" style="left:105px;top:312px;width:444px;height:333px;background:#808080"></div>
<div class="abs" style="left:99px;top:308px;width:444px;height:333px;background:#fff;border:1px solid #000"></div>
<!-- selected rect -->
<div class="abs" style="left:250px;top:421px;width:98px;height:76px;border:1px solid #b4202c"></div>
<div class="hd" style="left:241px;top:412px"></div><div class="hd" style="left:295px;top:412px"></div><div class="hd" style="left:350px;top:412px"></div>
<div class="hd" style="left:241px;top:455px"></div><div class="hd" style="left:350px;top:455px"></div>
<div class="hd" style="left:241px;top:498px"></div><div class="hd" style="left:295px;top:498px"></div><div class="hd" style="left:350px;top:498px"></div>
<svg class="abs" style="left:245px;top:417px" width="8" height="8"><path d="M4 0.5L7.5 4 4 7.5 0.5 4z" fill="#0000c8"/></svg>
<svg class="abs" style="left:294px;top:454px" width="9" height="9"><path d="M1 1l7 7M8 1l-7 7" stroke="#e818e0" stroke-width="2" fill="none"/></svg>

<!-- vertical scrollbar -->
<div class="abs" style="left:584px;top:119px;width:17px;height:660px;background:linear-gradient(90deg,#f1f0e9,#fcfbf7)"></div>
<div class="abs" style="left:586px;top:121px;width:14px;height:16px;border:1px solid #b4c4ee;border-radius:2px;background:linear-gradient(90deg,#cad8fb,#b7caf5)"><svg class="abs" style="left:2px;top:3px" width="9" height="8"><path d="M1 6l3.5-3.5L8 6" stroke="#4d6185" stroke-width="2" fill="none"/></svg></div>
<div class="abs" style="left:586px;top:453px;width:14px;height:16px;border:1px solid #e4ebfc;border-radius:2px;background:linear-gradient(90deg,#cad8fb,#b9ccf6)"><div class="abs" style="left:3px;top:3px;width:7px;height:8px;background:repeating-linear-gradient(#eef4fe 0 1px,#8caae6 1px 2px)"></div></div>
<div class="abs" style="left:601px;top:119px;width:6px;height:660px;background:#ece9d8;border-left:2px solid #f3f1e6"></div>

<!-- CONTROL PANEL -->
<div class="abs" style="left:607px;top:119px;width:276px;height:19px;background:#3166c9"></div>
<div class="t n" style="left:609px;top:122px;font-size:12px;line-height:14px;color:#fff">Control Panel</div>
<svg class="abs" style="left:868px;top:124px" width="10" height="10"><path d="M1 1l8 8M9 1l-8 8" stroke="#fff" stroke-width="1.2" fill="none"/></svg>

<div class="grp" style="left:607px;top:147px;width:269px;height:46px"></div>
<div class="gl" style="left:614px;top:141px">Communication mode</div>
<div class="btn" style="left:640px;top:160px;width:93px;height:22px;box-shadow:inset 0 0 0 2px #b5c9f3;line-height:20px"><span>Select Mode</span></div>
<div class="abs" style="left:739px;top:160px;width:127px;height:21px;border:1px solid #b5b3a4;border-right-color:#fff;border-bottom-color:#fff"></div>
<div class="t n" style="left:743px;top:161px;font-size:12px;line-height:14px">IP: 192.168.8.8</div>

<div class="grp" style="left:607px;top:205px;width:269px;height:185px"></div>
<div class="gl" style="left:614px;top:198px">Layer Options</div>
<div class="abs" style="left:612px;top:219px;width:260px;height:137px;background:#fff;border:1px solid #7f9db9"></div>
<div class="hdr" style="left:613px;top:220px;width:258px;height:20px"></div>
<div class="abs" style="left:867px;top:220px;width:4px;height:20px;background:#ece9d8"></div>
<div class="t n" style="left:623px;top:224px;font-size:12px;line-height:14px">La...</div>
<div class="t n" style="left:662px;top:224px;font-size:12px;line-height:14px">Mode</div>
<div class="t n" style="left:727px;top:224px;font-size:12px;line-height:14px">Speed</div>
<div class="t n" style="left:782px;top:224px;font-size:12px;line-height:14px">Power</div>
<div class="t n" style="left:836px;top:224px;font-size:12px;line-height:14px">O...</div>
<div class="hs" style="left:652px;top:223px;height:14px"></div>
<div class="hs" style="left:717px;top:223px;height:14px"></div>
<div class="hs" style="left:771px;top:223px;height:14px"></div>
<div class="hs" style="left:825px;top:223px;height:14px"></div>
<div class="hs" style="left:865px;top:223px;height:14px"></div>
<!-- row -->
<div class="abs" style="left:613px;top:241px;width:254px;height:16px;background:#ece9d8"></div>
<div class="abs" style="left:614px;top:241px;width:40px;height:16px;background:#000"></div>
<div class="t n" style="left:657px;top:242px;font-size:12px;line-height:14px">Engrave</div>
<div class="t n" style="left:722px;top:242px;font-size:12px;line-height:14px">300.00</div>
<div class="t n" style="left:775px;top:242px;font-size:12px;line-height:14px">50.00</div>
<div class="abs" style="left:828px;top:242px;width:13px;height:13px;background:#fff;border:1px solid #808080;border-right-color:#d4d0c8;border-bottom-color:#d4d0c8"></div>
<svg class="abs" style="left:829px;top:243px" width="11" height="11"><path d="M1.5 5l3 3 5-6" stroke="#000" stroke-width="1.8" fill="none"/></svg>
<div class="gh" style="left:613px;top:257px;width:258px"></div><div class="gh" style="left:613px;top:274px;width:258px"></div><div class="gh" style="left:613px;top:291px;width:258px"></div><div class="gh" style="left:613px;top:308px;width:258px"></div><div class="gh" style="left:613px;top:325px;width:258px"></div><div class="gh" style="left:613px;top:342px;width:258px"></div><div class="gv" style="left:654px;top:257px;height:98px"></div><div class="gv" style="left:719px;top:257px;height:98px"></div><div class="gv" style="left:773px;top:257px;height:98px"></div><div class="gv" style="left:827px;top:257px;height:98px"></div><div class="gv" style="left:867px;top:257px;height:98px"></div>

<div class="btn" style="left:646px;top:361px;width:39px;height:24px;line-height:22px"><span>Up</span></div>
<div class="btn" style="left:694px;top:361px;width:39px;height:24px;line-height:22px"><span>Down</span></div>
<div class="btn" style="left:746px;top:361px;width:39px;height:24px;line-height:22px"><span>Top</span></div>
<div class="btn" style="left:794px;top:361px;width:39px;height:24px;line-height:22px"><span>Bottom</span></div>

<div class="grp" style="left:607px;top:404px;width:269px;height:199px"></div>
<div class="gl" style="left:614px;top:397px;transform:scaleX(.905)">Machine Control</div>
<div class="btn" style="left:614px;top:416px;width:61px;height:27px;line-height:26px"><span>Origin</span></div>
<div class="btn" style="left:679px;top:416px;width:61px;height:27px;line-height:26px"><span>Run Box</span></div>
<div class="btn" style="left:743px;top:416px;width:61px;height:27px;line-height:26px"><span>Clip Box</span></div>
<div class="btn" style="left:808px;top:416px;width:61px;height:27px;line-height:26px"><span>Light</span></div>
<div class="btn" style="left:614px;top:447px;width:61px;height:27px;line-height:26px"><span>Download</span></div>
<div class="btn" style="left:679px;top:447px;width:61px;height:27px;line-height:26px"><span>Start</span></div>
<div class="btn" style="left:743px;top:447px;width:61px;height:27px;line-height:26px"><span>Pause/Continue</span></div>
<div class="btn" style="left:808px;top:447px;width:61px;height:27px;line-height:26px"><span>Stop</span></div>
<div class="btn" style="left:683px;top:489px;width:39px;height:31px;line-height:31px"><span>Y+</span></div>
<div class="btn" style="left:800px;top:489px;width:39px;height:31px;line-height:31px"><span>Z+</span></div>
<div class="btn" style="left:800px;top:525px;width:39px;height:31px;line-height:31px"><span style="left:0;right:2px;text-align:right">um</span></div>
<div class="btn" style="left:800px;top:561px;width:39px;height:31px;line-height:31px"><span style="left:0;right:14px;text-align:right">-</span></div>

<div class="grp" style="left:607px;top:602px;width:269px;height:69px"></div>
<div class="abs" style="left:790px;top:612px;width:62px;height:23px;background:#fff;border:1px solid #c9c7ba"></div>
<div class="abs" style="left:790px;top:638px;width:62px;height:23px;background:#fff;border:1px solid #c9c7ba"></div>

<div class="abs" style="left:299px;top:520px;width:523px;height:260px;background:linear-gradient(90deg,#0a3ce0 0,#0a3ce0 3px,#0831d9 4px,#0831d9 519px,#0a34d0 520px,#0520b0 521px,#001590 523px);border-radius:8px 8px 0 0"></div>
<div class="abs" style="left:299px;top:520px;width:523px;height:29px;border-radius:8px 8px 0 0;background:linear-gradient(#0a5fe8 0,#2f8bfa 8%,#0660ee 22%,#0055e5 55%,#0250dc 85%,#0148c8 100%)"></div>
<div class="abs" style="left:302px;top:549px;width:517px;height:230px;background:#ece9d8"></div>
<div class="t" style="left:305px;top:529px;font-size:13px;font-weight:bold;color:#fff;line-height:16px;letter-spacing:0;transform:scaleX(1.02);transform-origin:0 0;text-shadow:1px 1px 0 #0a2c8c">Layer Parameters</div>
<div class="abs" style="left:797px;top:525px;width:21px;height:21px;border:1px solid #fff;border-radius:3px;background:linear-gradient(135deg,#e9917a,#d9502e 45%,#c33a14)"><svg class="abs" style="left:0;top:0" width="19" height="19"><path d="M5 5l9 9M14 5l-9 9" stroke="#fff" stroke-width="2.2" fill="none"/></svg></div>

<!-- list -->
<div class="abs" style="left:314px;top:557px;width:142px;height:230px;background:#fff;border:1px solid #7f9db9"></div>
<div class="hdr" style="left:315px;top:558px;width:140px;height:20px"></div>
<div class="t n" style="left:324px;top:561px;font-size:12px;line-height:14px">Pen</div>
<div class="t n" style="left:369px;top:561px;font-size:12px;line-height:14px">Color</div>
<div class="hs" style="left:358px;top:561px;height:14px"></div>
<div class="t n" style="left:318px;top:580px;font-size:12px;line-height:14px">0</div>
<div class="abs" style="left:361px;top:578px;width:93px;height:16px;background:#000"></div>
<div class="gh" style="left:315px;top:594px;width:140px"></div><div class="gh" style="left:315px;top:611px;width:140px"></div><div class="gh" style="left:315px;top:628px;width:140px"></div><div class="gh" style="left:315px;top:645px;width:140px"></div><div class="gh" style="left:315px;top:662px;width:140px"></div><div class="gh" style="left:315px;top:679px;width:140px"></div><div class="gh" style="left:315px;top:696px;width:140px"></div><div class="gh" style="left:315px;top:713px;width:140px"></div><div class="gh" style="left:315px;top:730px;width:140px"></div><div class="gh" style="left:315px;top:747px;width:140px"></div><div class="gh" style="left:315px;top:764px;width:140px"></div><div class="gh" style="left:315px;top:781px;width:140px"></div><div class="gv" style="left:360px;top:578px;height:200px"></div>

<!-- group 1 -->
<div class="grp" style="left:466px;top:555px;width:231px;height:113px"></div>
<div class="t nr" style="left:466px;top:565px;width:79px;text-align:right;font-size:12px;line-height:14px">Layer:</div>
<div class="abs" style="left:587px;top:559px;width:96px;height:24px;background:#000"></div>
<div class="t nr" style="left:466px;top:590px;width:93px;text-align:right;font-size:12px;line-height:14px">Work Mode:</div>
<div class="abs" style="left:587px;top:585px;width:96px;height:21px;background:#fff;border:1px solid #7f9db9"></div>
<div class="abs" style="left:589px;top:588px;width:76px;height:13px;background:#316ac5;overflow:hidden"><div class="t n" style="left:1px;top:0px;font-size:12px;line-height:14px;color:#fff">Cut after engrave</div></div>
<div class="abs" style="left:666px;top:587px;width:15px;height:17px;border:1px solid #b4c4ee;border-radius:2px;background:linear-gradient(135deg,#cfdcfd,#b3c7f5)"><svg class="abs" style="left:2px;top:4px" width="10" height="8"><path d="M1.5 1.5L5 5l3.500-3.500" stroke="#4d6185" stroke-width="2" fill="none"/></svg></div>
<div class="t nr" style="left:466px;top:616px;width:103px;text-align:right;font-size:12px;line-height:14px">Number of pass:</div>
<div class="inp" style="left:587px;top:611px;width:96px;height:23px;padding-top:2px"><span class="ns">1</span></div>
<div class="abs" style="left:497px;top:641px;width:13px;height:13px;border:1px solid #1c5180;background:linear-gradient(135deg,#dcdcd5,#fff)"></div>
<svg class="abs" style="left:499px;top:643px" width="9" height="9"><path d="M1 4l2.500 2.500L8 1.500" stroke="#21a121" stroke-width="2" fill="none"/></svg>
<div class="t n" style="left:513px;top:641px;font-size:12px;line-height:14px">Laser PPI:</div>
<div class="inp" style="left:587px;top:637px;width:96px;height:23px;padding-top:2px"><span class="ns">800</span></div>

<!-- group 2 -->
<div class="grp" style="left:466px;top:679px;width:231px;height:110px"></div>
<div class="gl" style="left:473px;top:673px">Cut Parameters</div>
<div class="t nr" style="left:466px;top:694px;width:82px;text-align:right;font-size:12px;line-height:14px">Speed:</div>
<div class="inp" style="left:590px;top:687px;width:96px;height:24px;padding-top:2px"><span class="ns">100.00</span></div>
<div class="t nr" style="left:466px;top:720px;width:100px;text-align:right;font-size:12px;line-height:14px">MaxPower1(%):</div>
<div class="inp" style="left:590px;top:713px;width:96px;height:24px;padding-top:2px"><span class="ns">50.00</span></div>
<div class="t nr" style="left:466px;top:746px;width:100px;text-align:right;font-size:12px;line-height:14px">MinPower1(%):</div>
<div class="inp" style="left:590px;top:739px;width:96px;height:24px;padding-top:2px"><span class="ns">40.00</span></div>
<div class="inp" style="left:590px;top:765px;width:96px;height:24px"></div>

<div class="btn" style="left:728px;top:563px;width:81px;height:31px;line-height:31px;box-shadow:inset 0 0 0 2px #b5c9f3"><span>OK</span></div>
<div class="btn" style="left:728px;top:607px;width:81px;height:31px;line-height:31px"><span>Cancel</span></div>


</body></html>
